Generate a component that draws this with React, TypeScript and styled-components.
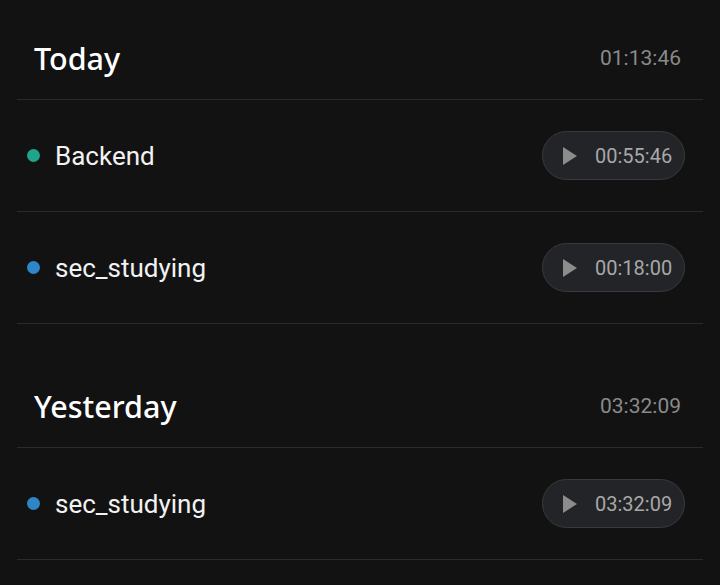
import React from 'react';
import styled, { createGlobalStyle } from 'styled-components';

type Entry = {
  name: string;
  color: string;
  duration: string;
};

type Day = {
  label: string;
  total: string;
  entries: Entry[];
};

const days: Day[] = [
  {
    label: 'Today',
    total: '01:13:46',
    entries: [
      { name: 'Backend', color: '#1fa58a', duration: '00:55:46' },
      { name: 'sec_studying', color: '#2f86c6', duration: '00:18:00' },
    ],
  },
  {
    label: 'Yesterday',
    total: '03:32:09',
    entries: [{ name: 'sec_studying', color: '#2f86c6', duration: '03:32:09' }],
  },
];

const GlobalStyle = createGlobalStyle`
  html, body {
    margin: 0;
    background: #121212;
  }
  body {
    font-family: Roboto, "Liberation Sans", sans-serif;
  }
`;

const Page = styled.main`
  padding: 17px 17px 0;
  display: flex;
  flex-direction: column;
  gap: 41px;
`;

const DaySection = styled.section`
  display: flex;
  flex-direction: column;
`;

const DayHeader = styled.header`
  height: 82px;
  display: flex;
  align-items: center;
  justify-content: space-between;
  padding: 0 22px 0 17px;
  border-bottom: 1px solid #2a2a2a;
`;

const DayTitle = styled.h2`
  margin: 0;
  font-family: "Noto Sans", "Open Sans", sans-serif;
  font-size: 30.5px;
  font-weight: 500;
  color: #ffffff;
`;

const DayTotal = styled.span`
  font-size: 21px;
  color: #8a8a8a;
`;

const Row = styled.div`
  height: 111px;
  display: flex;
  align-items: center;
  padding: 0 18px 0 10px;
  border-bottom: 1px solid #2a2a2a;
`;

const Dot = styled.span<{ $color: string }>`
  width: 13px;
  height: 13px;
  border-radius: 50%;
  background: ${(p) => p.$color};
  flex-shrink: 0;
`;

const Label = styled.span`
  margin-left: 15px;
  flex: 1;
  font-size: 26px;
  color: #f2f2f2;
`;

const PlayButton = styled.button`
  box-sizing: border-box;
  width: 143px;
  height: 49px;
  display: flex;
  align-items: center;
  gap: 18px;
  padding: 0 0 0 20px;
  border-radius: 25px;
  border: 1px solid #393a3d;
  background: #232427;
  font-family: Roboto, "Liberation Sans", sans-serif;
  font-size: 20px;
  color: #a8a8a8;
  cursor: pointer;

  svg {
    flex-shrink: 0;
  }
`;

const PlayIcon = () => (
  <svg width="14" height="18" viewBox="0 0 14 18">
    <path d="M0 0 L14 9 L0 18 Z" fill="#8c8c8c" />
  </svg>
);

export default function App() {
  return (
    <>
      <GlobalStyle />
      <Page>
        {days.map((day) => (
          <DaySection key={day.label}>
            <DayHeader>
              <DayTitle>{day.label}</DayTitle>
              <DayTotal>{day.total}</DayTotal>
            </DayHeader>
            {day.entries.map((entry, i) => (
              <Row key={i}>
                <Dot $color={entry.color} />
                <Label>{entry.name}</Label>
                <PlayButton>
                  <PlayIcon />
                  {entry.duration}
                </PlayButton>
              </Row>
            ))}
          </DaySection>
        ))}
      </Page>
    </>
  );
}
